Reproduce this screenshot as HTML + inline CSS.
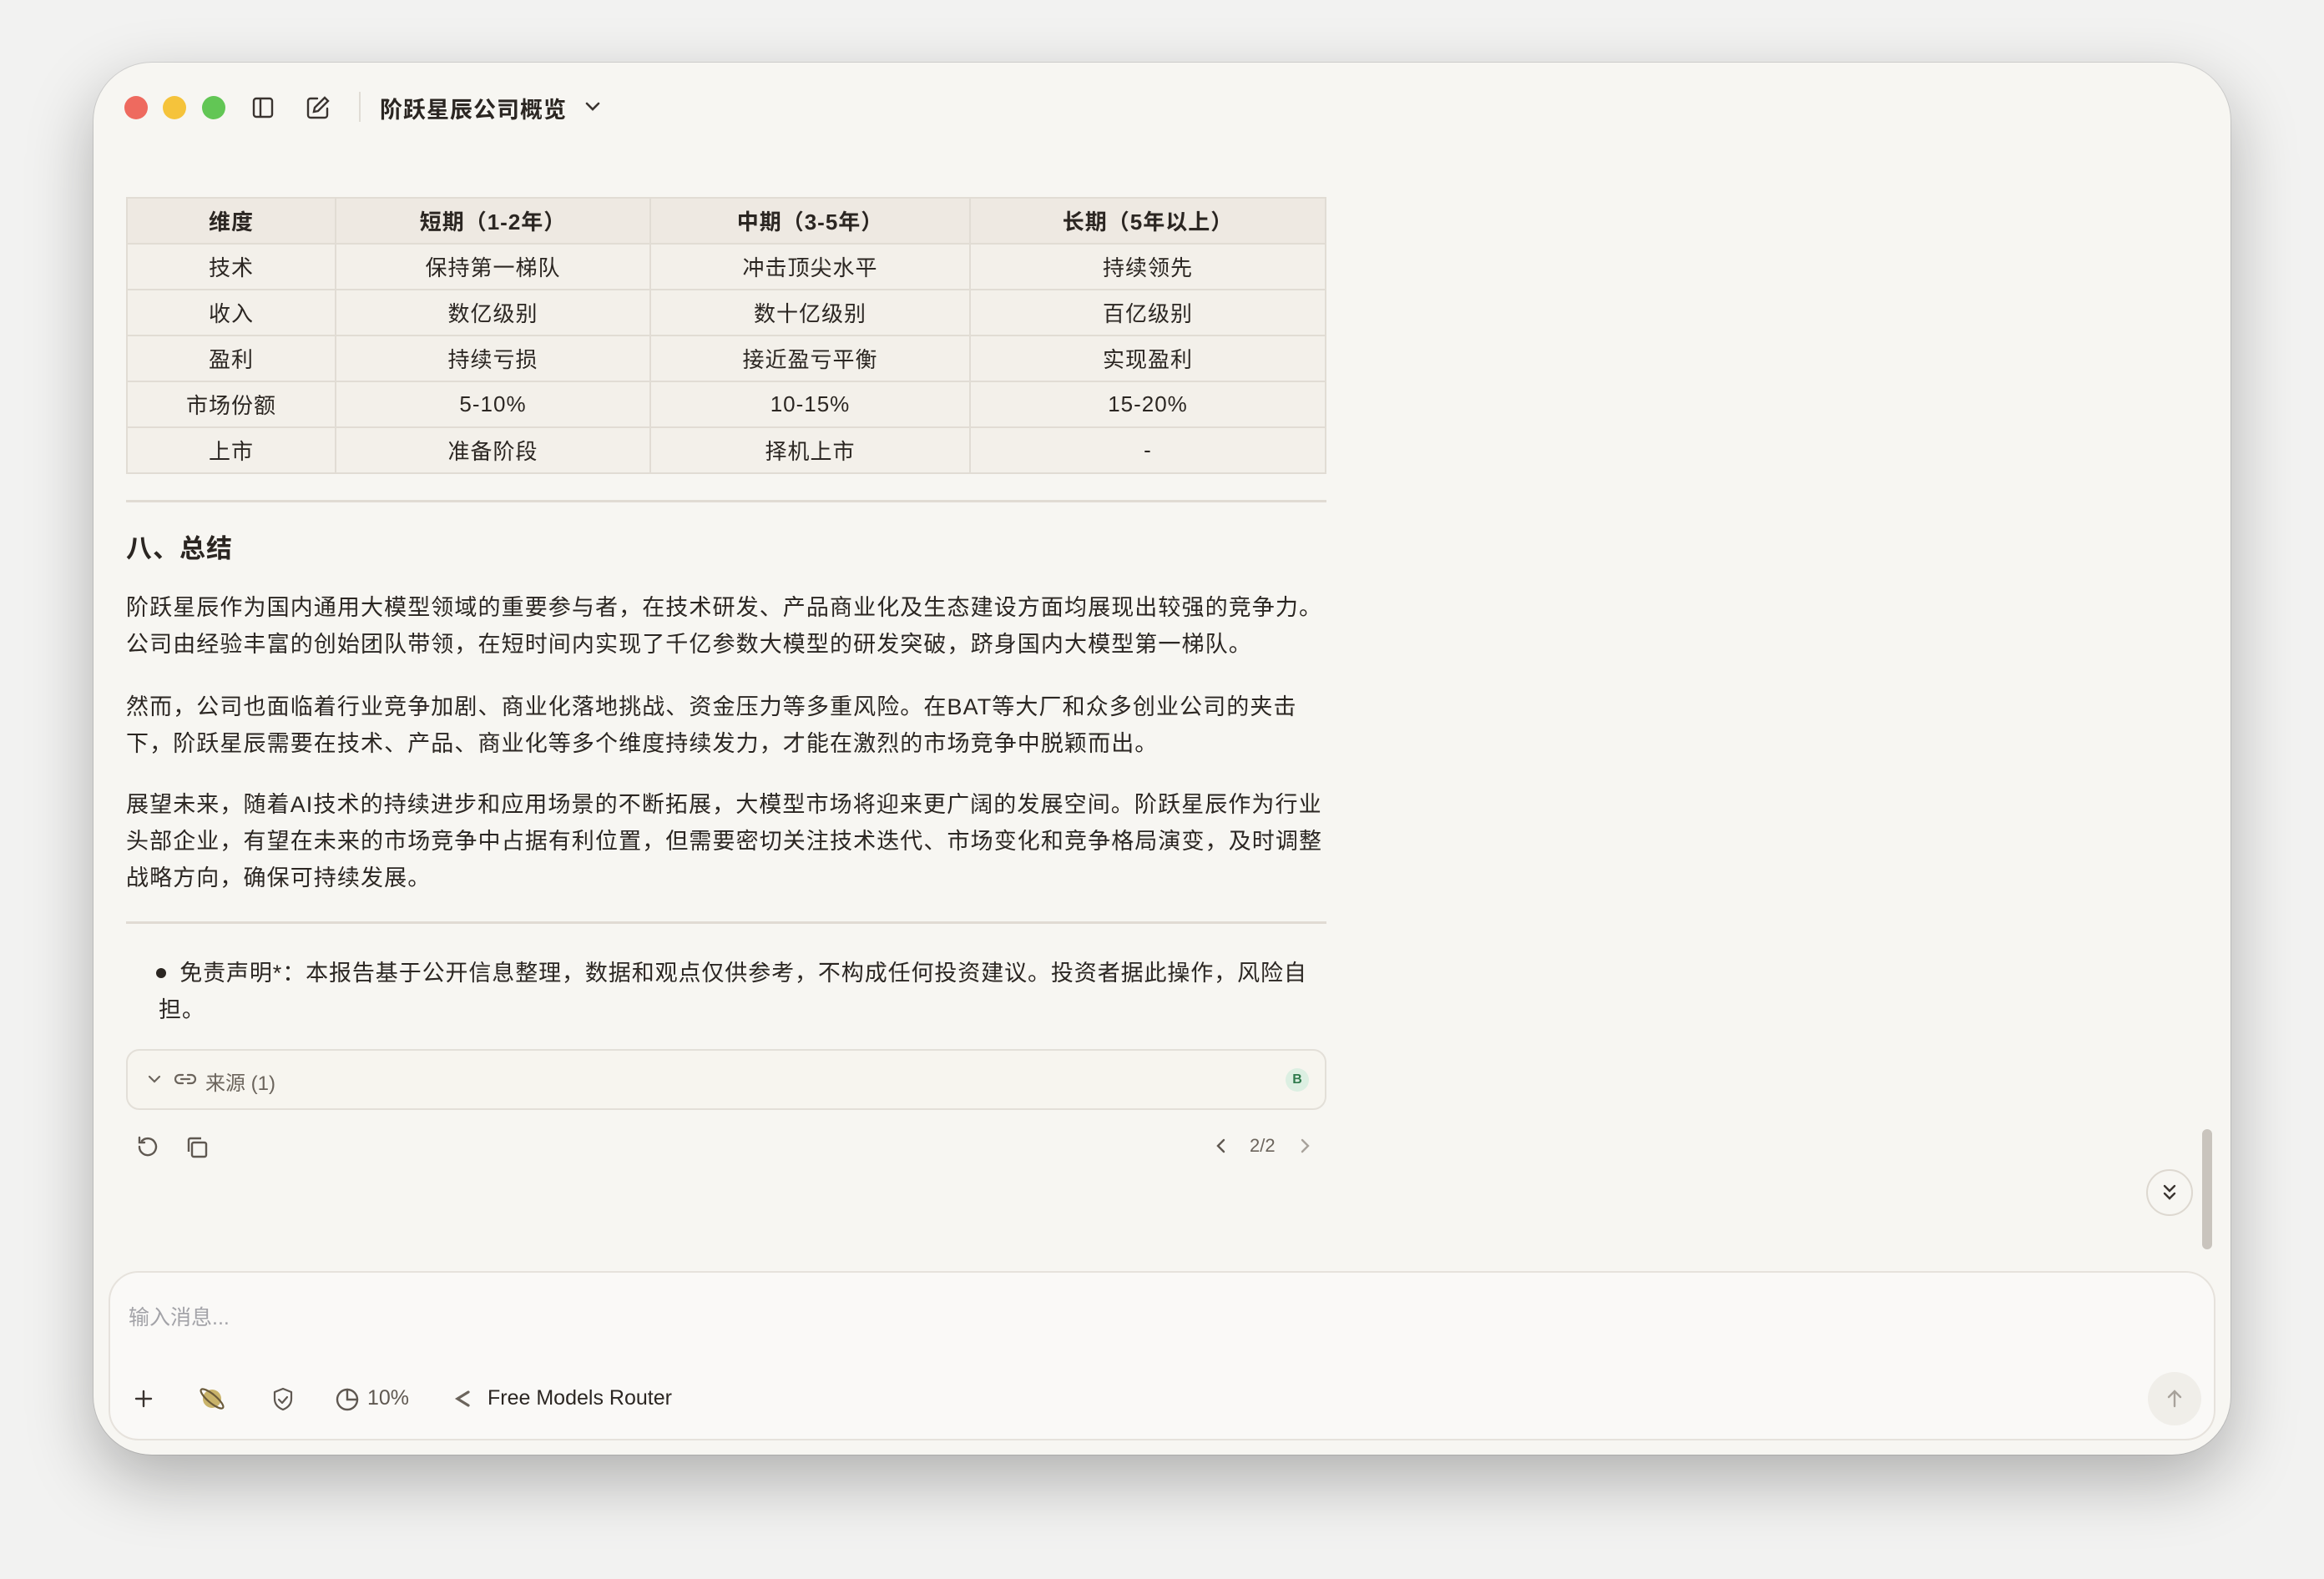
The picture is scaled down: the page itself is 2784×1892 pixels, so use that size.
<!DOCTYPE html>
<html><head><meta charset="utf-8"><style>
*{box-sizing:border-box;margin:0;padding:0}
body{width:2784px;height:1892px;background:#f2f2f1;font-family:"Liberation Sans","Noto Sans CJK SC",sans-serif;color:#2b2622;position:relative;overflow:hidden}
.win{position:absolute;left:112px;top:75px;width:2560px;height:1668px;background:#f7f6f2;border-radius:70px;box-shadow:0 30px 80px rgba(0,0,0,.28),0 0 0 1px rgba(0,0,0,.1)}
.abs{position:absolute}
.dot{position:absolute;top:115px;width:28px;height:28px;border-radius:50%}
table{position:absolute;left:151px;top:236px;width:1438px;border-collapse:collapse;font-size:26px;letter-spacing:1px}
td,th{border:2px solid #e1dcd4;height:55px;text-align:center;background:#f3f0ea;font-weight:normal}
th{background:#eee9e2;font-weight:bold}
.hr{position:absolute;left:151px;width:1438px;height:3px;background:#e0dbd3}
p.t{position:absolute;left:151px;white-space:nowrap;font-size:27px;letter-spacing:1.1px;line-height:44px}
svg{position:absolute}
</style></head><body>
<div class="win"></div>
<div class="dot" style="left:149px;background:#ee6a5f"></div>
<div class="dot" style="left:195px;background:#f5c33b"></div>
<div class="dot" style="left:242px;background:#62c655"></div>
<svg style="left:302px;top:116px" width="26" height="26" viewBox="0 0 26 26" fill="none" stroke="#3a3430" stroke-width="2.4"><rect x="2" y="2" width="22" height="22" rx="3"/><line x1="10" y1="2" x2="10" y2="24"/></svg>
<svg style="left:366px;top:114px" width="30" height="30" viewBox="0 0 30 30" fill="none" stroke="#3a3430" stroke-width="2.4" stroke-linecap="round"><path d="M14 4H6a3 3 0 0 0-3 3v17a3 3 0 0 0 3 3h17a3 3 0 0 0 3-3v-8"/><path d="M23 3l4 4-12 12-5 1 1-5z"/></svg>
<div class="abs" style="left:430px;top:110px;width:2px;height:36px;background:#e0dcd5"></div>
<div class="abs" style="left:455px;top:110px;font-size:27px;font-weight:bold;letter-spacing:1px;color:#2b2622">阶跃星辰公司概览</div>
<svg style="left:700px;top:120px" width="20" height="16" viewBox="0 0 20 16" fill="none" stroke="#3a3430" stroke-width="2.6" stroke-linecap="round"><path d="M3 4l7 7 7-7"/></svg>

<table>
<tr><th style="width:250px">维度</th><th style="width:377px">短期（1-2年）</th><th style="width:383px">中期（3-5年）</th><th>长期（5年以上）</th></tr>
<tr><td>技术</td><td>保持第一梯队</td><td>冲击顶尖水平</td><td>持续领先</td></tr>
<tr><td>收入</td><td>数亿级别</td><td>数十亿级别</td><td>百亿级别</td></tr>
<tr><td>盈利</td><td>持续亏损</td><td>接近盈亏平衡</td><td>实现盈利</td></tr>
<tr><td>市场份额</td><td>5-10%</td><td>10-15%</td><td>15-20%</td></tr>
<tr><td>上市</td><td>准备阶段</td><td>择机上市</td><td>-</td></tr>
</table>
<div class="hr" style="top:599px"></div>
<div class="abs" style="left:151px;top:632px;font-size:31px;font-weight:bold;letter-spacing:1px">八、总结</div>
<p class="t" style="top:706px">阶跃星辰作为国内通用大模型领域的重要参与者，在技术研发、产品商业化及生态建设方面均展现出较强的竞争力。<br>公司由经验丰富的创始团队带领，在短时间内实现了千亿参数大模型的研发突破，跻身国内大模型第一梯队。</p>
<p class="t" style="top:825px">然而，公司也面临着行业竞争加剧、商业化落地挑战、资金压力等多重风险。在BAT等大厂和众多创业公司的夹击<br>下，阶跃星辰需要在技术、产品、商业化等多个维度持续发力，才能在激烈的市场竞争中脱颖而出。</p>
<p class="t" style="top:942px">展望未来，随着AI技术的持续进步和应用场景的不断拓展，大模型市场将迎来更广阔的发展空间。阶跃星辰作为行业<br>头部企业，有望在未来的市场竞争中占据有利位置，但需要密切关注技术迭代、市场变化和竞争格局演变，及时调整<br>战略方向，确保可持续发展。</p>
<div class="hr" style="top:1104px"></div>
<div class="abs" style="left:187px;top:1160px;width:12px;height:12px;border-radius:50%;background:#2b2622"></div>
<p class="t" style="left:190px;top:1144px;letter-spacing:0.9px">&nbsp;&nbsp;&nbsp;免责声明*：本报告基于公开信息整理，数据和观点仅供参考，不构成任何投资建议。投资者据此操作，风险自<br>担。</p>

<div class="abs" style="left:151px;top:1257px;width:1438px;height:73px;border:2px solid #e3dfd8;border-radius:16px;background:#f7f5ef"></div>
<svg style="left:176px;top:1286px" width="18" height="14" viewBox="0 0 18 14" fill="none" stroke="#6b645c" stroke-width="2.2" stroke-linecap="round"><path d="M3 4l6 6 6-6"/></svg>
<svg style="left:208px;top:1283px" width="28" height="20" viewBox="0 0 28 20" fill="none" stroke="#6b645c" stroke-width="2.2" stroke-linecap="round"><path d="M11 5H7a5 5 0 0 0 0 10h4M17 5h4a5 5 0 0 1 0 10h-4M9 10h10"/></svg>
<div class="abs" style="left:246px;top:1278px;font-size:24px;color:#6b645c">来源 (1)</div>
<div class="abs" style="left:1540px;top:1280px;width:28px;height:28px;border-radius:50%;background:#dcefe2;color:#2f7a4c;font-size:16px;font-weight:bold;text-align:center;line-height:28px">B</div>

<svg style="left:162px;top:1359px" width="30" height="30" viewBox="0 0 30 30" fill="none" stroke="#5f5851" stroke-width="2.4" stroke-linecap="round"><path d="M5 15a10 10 0 1 0 3-7"/><path d="M5 4v6h6"/></svg>
<svg style="left:221px;top:1360px" width="30" height="30" viewBox="0 0 30 30" fill="none" stroke="#5f5851" stroke-width="2.4"><rect x="9" y="9" width="17" height="17" rx="2"/><path d="M5 20V6a2 2 0 0 1 2-2h13"/></svg>
<svg style="left:1455px;top:1362px" width="16" height="22" viewBox="0 0 16 22" fill="none" stroke="#5f5851" stroke-width="2.4" stroke-linecap="round"><path d="M11 4l-7 7 7 7"/></svg>
<div class="abs" style="left:1497px;top:1360px;font-size:22px;color:#6b645c">2/2</div>
<svg style="left:1555px;top:1362px" width="16" height="22" viewBox="0 0 16 22" fill="none" stroke="#a8a29b" stroke-width="2.4" stroke-linecap="round"><path d="M5 4l7 7-7 7"/></svg>

<div class="abs" style="left:2571px;top:1401px;width:56px;height:56px;border-radius:50%;border:2px solid #ddd8d0;background:#f7f6f2"></div>
<svg style="left:2589px;top:1418px" width="20" height="22" viewBox="0 0 20 22" fill="none" stroke="#3a3430" stroke-width="2.4" stroke-linecap="round"><path d="M4 3l6 6 6-6M4 12l6 6 6-6"/></svg>
<div class="abs" style="left:2638px;top:1353px;width:12px;height:144px;border-radius:6px;background:#c9c4bd"></div>

<div class="abs" style="left:130px;top:1523px;width:2524px;height:203px;border:2px solid #e6e2dc;border-radius:36px;background:#faf9f7"></div>
<div class="abs" style="left:154px;top:1559px;font-size:25px;color:#a3a3a8">输入消息...</div>
<svg style="left:160px;top:1664px" width="24" height="24" viewBox="0 0 24 24" stroke="#3a3430" stroke-width="2.4" stroke-linecap="round"><path d="M12 3v18M3 12h18"/></svg>
<svg style="left:236px;top:1658px" width="36" height="36" viewBox="0 0 36 36"><circle cx="18" cy="18" r="11" fill="#c9b36a"/><ellipse cx="18" cy="18" rx="17" ry="5" fill="none" stroke="#6a5a3a" stroke-width="2.2" transform="rotate(40 18 18)"/></svg>
<svg style="left:326px;top:1662px" width="26" height="30" viewBox="0 0 26 30" fill="none" stroke="#5f5851" stroke-width="2.2" stroke-linecap="round" stroke-linejoin="round"><path d="M13 2l10 4v8c0 7-5 11-10 13-5-2-10-6-10-13V6z"/><path d="M8 15l4 4 6-7"/></svg>
<svg style="left:401px;top:1662px" width="30" height="30" viewBox="0 0 30 30" fill="none" stroke="#5f5851" stroke-width="2.4" stroke-linecap="round"><circle cx="15" cy="15" r="12"/><path d="M15 3v12h12"/></svg>
<div class="abs" style="left:440px;top:1661px;font-size:25px;color:#5f5851">10%</div>
<svg style="left:543px;top:1664px" width="22" height="24" viewBox="0 0 22 24" fill="none" stroke="#6b645c" stroke-width="3.2" stroke-linecap="round"><path d="M18 4L5 12l13 8"/></svg>
<div class="abs" style="left:584px;top:1661px;font-size:25px;color:#2b2622">Free Models Router</div>
<div class="abs" style="left:2573px;top:1644px;width:64px;height:64px;border-radius:50%;background:#f0eee9"></div>
<svg style="left:2593px;top:1664px" width="24" height="24" viewBox="0 0 24 24" fill="none" stroke="#a8a29b" stroke-width="2.4" stroke-linecap="round"><path d="M12 21V3M5 10l7-7 7 7"/></svg>
</body></html>
